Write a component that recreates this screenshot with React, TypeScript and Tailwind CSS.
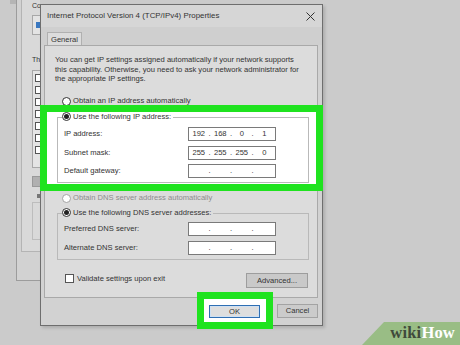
import type { ReactNode } from 'react'

function Radio({ checked = false, disabled = false }: { checked?: boolean; disabled?: boolean }) {
  return (
    <span
      className={`flex h-[9px] w-[9px] shrink-0 items-center justify-center rounded-full border bg-white ${
        disabled ? 'border-[#a3a3a3]' : 'border-[#333]'
      }`}
    >
      {checked && <span className="h-[5px] w-[5px] rounded-full bg-[#222]" />}
    </span>
  )
}

function IpField({ parts = ['', '', '', ''] }: { parts?: string[] }) {
  return (
    <div className="flex h-[14px] w-[88px] items-center border border-[#7a7a7a] bg-white text-[#333]">
      {parts.map((p, i) => (
        <div key={i} className="flex flex-1 items-center">
          <span className="flex-1 text-center">{p}</span>
          {i < 3 && <span className="w-[2px] text-center">.</span>}
        </div>
      ))}
    </div>
  )
}

function Row({ label, parts }: { label: string; parts?: string[] }) {
  return (
    <div className="flex items-center">
      <span className="w-[124px]">{label}</span>
      <IpField parts={parts} />
    </div>
  )
}

function Group({ legend, children, className = '', bg = 'bg-[#dcdcdc]' }: { legend: ReactNode; children: ReactNode; className?: string; bg?: string }) {
  return (
    <div className={`relative border border-[#b9b9b9] ${className}`}>
      <div className={`absolute left-[4px] top-[-6px] flex items-center gap-[2px] pr-[2px] ${bg}`}>{legend}</div>
      {children}
    </div>
  )
}

// window behind the dialog, only its left strip shows
function BackWindow() {
  return (
    <div className="absolute left-[16px] top-[-10px] h-[291px] w-[24px] overflow-hidden border-b border-l border-[#9c9c9c] bg-[#d2d2d2] text-[#333]">
      <div className="ml-[4px] flex h-[262px] w-[60px] flex-col whitespace-nowrap border-b border-l border-[#b4b4b4] bg-[#d9d9d9] pl-[10px] pt-[12px]">
        <span className="text-[7px] leading-[8px]">Co</span>
        <div className="mt-[5px] flex h-[20px] items-center border border-[#a8a8a8] bg-[#e4e4e4] pl-[3px]">
          <span className="h-[6px] w-[5px] bg-[#3a78c0]" />
        </div>
        <span className="mt-[21px] text-[7px] leading-[8px]">Th</span>
        <div className="mt-[6px] flex h-[98px] flex-col gap-[4px] border border-[#a8a8a8] bg-[#e4e4e4] pl-[2px] pt-[3px]">
          {[0, 1, 2, 3, 4, 5, 6].map((i) => (
            <span key={i} className="h-[8px] w-[6px] border border-[#555] bg-white" />
          ))}
        </div>
        <div className="mt-[8px] h-[11px] border border-[#999] bg-[#b0b0b0]" />
        <div className="ml-[5px] mt-[7px] h-[4px] w-[3px] bg-[#777]" />
        <div className="mt-[4px] h-[38px] border border-[#bdbdbd]" />
      </div>
    </div>
  )
}

function Dialog() {
  return (
    <div className="absolute left-[40px] top-[4px] flex h-[322px] w-[283px] flex-col border border-[#6e6e6e] bg-[#d2d2d2] text-[#333] shadow-[2px_2px_3px_rgba(0,0,0,0.15)]">
      <div className="flex h-[22px] shrink-0 items-center justify-between bg-[#d6d6d6] pl-[6px] pr-[6px]">
        <span className="text-[7.9px]">Internet Protocol Version 4 (TCP/IPv4) Properties</span>
        <svg width="9" height="9" viewBox="0 0 9 9" className="mr-[1px]">
          <path d="M0.5 0.5 L8.5 8.5 M8.5 0.5 L0.5 8.5" stroke="#333" strokeWidth="1" />
        </svg>
      </div>
      <div className="flex h-[18px] shrink-0 items-end bg-[#cfcfcf] pl-[6px]">
        <div className="-mb-px flex h-[14px] w-[35px] items-center justify-center border border-b-0 border-[#b0b0b0] bg-[#dcdcdc]">
          General
        </div>
      </div>
      <div className="ml-[3px] mr-[4px] flex h-[253px] shrink-0 flex-col border border-[#a9a9a9] bg-[#dcdcdc]">
        <p className="px-[10px] pt-[9px] leading-[9.5px]">
          You can get IP settings assigned automatically if your network supports this capability. Otherwise, you need to ask your network administrator for the appropriate IP settings.
        </p>
        <div className="ml-[17px] mt-[12.5px] flex h-[10px] items-center gap-[2px]">
          <Radio />
          <span>Obtain an IP address automatically</span>
        </div>
        <div className="relative -ml-[5px] -mr-[6px] -mt-[1px] h-[86px] border-[7px] border-[#1fe31f] bg-white pt-[5px]">
          <Group
            bg="bg-white"
            className="ml-[10px] mr-[7px] h-[66px] flex-col pl-[6px] pt-[9px]"
            legend={
              <>
                <Radio checked />
                <span>Use the following IP address:</span>
              </>
            }
          >
            <div className="flex flex-col gap-[4.5px]">
              <Row label="IP address:" parts={['192', '168', '0', '1']} />
              <Row label="Subnet mask:" parts={['255', '255', '255', '0']} />
              <Row label="Default gateway:" />
            </div>
          </Group>
        </div>
        <div className="ml-[17px] mt-[2px] flex h-[10px] items-center gap-[2px] text-[#8c8c8c]">
          <Radio disabled />
          <span>Obtain DNS server address automatically</span>
        </div>
        <Group
          className="ml-[12px] mr-[8px] mt-[10px] h-[47px] pl-[6px] pt-[8px]"
          legend={
            <>
              <Radio checked />
              <span>Use the following DNS server addresses:</span>
            </>
          }
        >
          <div className="flex flex-col gap-[5px]">
            <Row label="Preferred DNS server:" />
            <Row label="Alternate DNS server:" />
          </div>
        </Group>
        <div className="ml-[20px] mr-[9px] mt-[13px] flex items-start justify-between">
          <div className="mt-[1px] flex items-center gap-[3px]">
            <span className="h-[9px] w-[9px] border border-[#555] bg-white" />
            <span>Validate settings upon exit</span>
          </div>
          <div className="flex h-[15px] w-[62px] items-center justify-center border border-[#9d9d9d] bg-[#c9c9c9]">
            Advanced...
          </div>
        </div>
      </div>
      <div className="flex flex-1 items-start justify-end gap-[17px] pr-[4px] pt-[6px]">
        <div className="relative">
          <div className="absolute -bottom-[11px] -left-[12px] -right-[13px] -top-[12px] border-[7px] border-[#1fe31f] bg-white" />
          <div className="relative mt-[1px] flex h-[13px] w-[51px] items-center justify-center border border-[#2f6fb3] bg-[#dedede] shadow-[inset_0_0_0_1px_#cfe0f2]">
            OK
          </div>
        </div>
        <div className="flex h-[14px] w-[41px] items-center justify-center border border-[#a3a3a3] bg-[#cbcbcb]">
          Cancel
        </div>
      </div>
    </div>
  )
}

function WikiHowBadge() {
  return (
    <div className="absolute bottom-0 right-0 flex h-[23px] w-[98px] items-center justify-end pr-[5px]">
      <svg className="absolute inset-0" width="98" height="23" viewBox="0 0 98 23">
        <polygon points="22,0 98,0 98,23 0,23" fill="#99bd85" />
      </svg>
      <span className="relative font-['Liberation_Serif',serif] text-[16.5px] font-bold leading-none tracking-[0.2px]">
        <span className="text-[#3f4a3b]">wiki</span>
        <span className="text-white">How</span>
      </span>
    </div>
  )
}

export default function App() {
  return (
    <div className="relative h-[345px] w-[460px] overflow-hidden bg-[#cbcbcb] font-['Liberation_Sans',Arial,sans-serif] text-[7.6px] leading-none">
      <div className="absolute left-[10px] top-0 h-[4px] w-[6px] bg-[#b5b5b5]" />
      <BackWindow />
      <Dialog />
      <WikiHowBadge />
    </div>
  )
}
